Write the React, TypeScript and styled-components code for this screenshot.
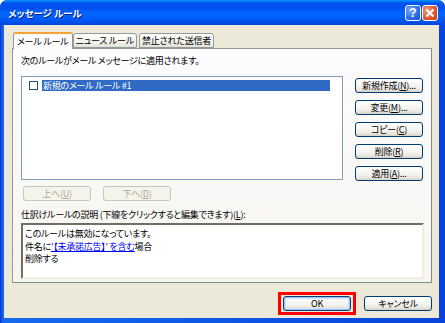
import React from "react";
import styled, { createGlobalStyle } from "styled-components";

const GlobalStyle = createGlobalStyle`
  html, body {
    margin: 0;
    padding: 0;
    background: #fff;
  }
  body {
    font-family: "Noto Sans CJK JP", "Liberation Sans", sans-serif;
    font-size: 9px;
    letter-spacing: -0.25px;
    font-feature-settings: "palt";
    color: #000;
  }
`;

const colors = {
  face: "#ECE9D8",
  border: "#919B9C",
  btnBorder: "#003C74",
  select: "#316AC5",
  disabled: "#ACA899",
  link: "#0000FF",
};

const Window = styled.div`
  width: 445px;
  height: 323px;
  box-sizing: border-box;
  display: flex;
  flex-direction: column;
  background: linear-gradient(90deg, #0831d9, #166aee 3px, #0843dc 445px);
  padding: 0 6px 5px 4px;
  border-radius: 7px 7px 0 0;
  overflow: hidden;
`;

const TitleBar = styled.div`
  height: 25px;
  margin: 0 -6px 0 -4px;
  padding: 0 7px 0 8px;
  display: flex;
  align-items: center;
  background: linear-gradient(
    180deg,
    #0997ff 0,
    #0053ee 3px,
    #0050ee 8px,
    #0066ff 14px,
    #0058f5 20px,
    #0046d8 25px
  );
  border-radius: 7px 7px 0 0;
`;

const Title = styled.div`
  flex: 1;
  color: #fff;
  font-weight: bold;
  font-size: 9.5px;
  letter-spacing: 0;
  text-shadow: 1px 1px 0 #0a1883;
`;

const CaptionButton = styled.div<{ $close?: boolean }>`
  width: 16px;
  height: 16px;
  margin-left: 1px;
  box-sizing: border-box;
  border: 1px solid #fff;
  border-radius: 3px;
  display: flex;
  align-items: center;
  justify-content: center;
  color: #fff;
  font-family: "Liberation Sans", sans-serif;
  font-weight: bold;
  font-size: 12px;
  letter-spacing: 0;
  background: ${(p) =>
    p.$close
      ? "radial-gradient(circle at 30% 30%, #f29a7c, #e0532f 60%, #c93b18)"
      : "radial-gradient(circle at 30% 30%, #7eaaf8, #2a6ae8 60%, #1b4fd0)"};
`;

const Body = styled.div`
  flex: 1;
  background: ${colors.face};
  display: flex;
  flex-direction: column;
  padding: 7px 5px 0 8px;
`;

const TabRow = styled.div`
  display: flex;
  height: 16px;
  align-items: flex-end;
  padding-left: 1px;
  position: relative;
  z-index: 1;
`;

const Tab = styled.div<{ $active?: boolean }>`
  box-sizing: border-box;
  height: ${(p) => (p.$active ? "17px" : "15px")};
  padding: 0 ${(p) => (p.$active ? "3px" : "2px")};
  margin-right: ${(p) => (p.$active ? "0" : "2px")};
  margin-bottom: ${(p) => (p.$active ? "-1px" : "0")};
  border: 1px solid ${colors.border};
  border-bottom: ${(p) => (p.$active ? "none" : `1px solid ${colors.border}`)};
  border-top: ${(p) => (p.$active ? "2px solid #f1a33a" : `1px solid ${colors.border}`)};
  border-radius: 3px 3px 0 0;
  background: ${(p) =>
    p.$active ? "#fcfcfe" : "linear-gradient(#ffffff, #f1efe8 70%, #e4e1d6)"};
  display: flex;
  align-items: center;
  line-height: 1;
  font-size: 9px;
  letter-spacing: -0.2px;
`;

const Panel = styled.div`
  width: 420px;
  height: 235px;
  box-sizing: border-box;
  border: 1px solid ${colors.border};
  border-right-color: #7e8a8c;
  border-bottom-color: #7e8a8c;
  background: linear-gradient(#fcfcfe, #f6f5f0);
  padding: 6px 8px 0 8px;
  display: flex;
  flex-direction: column;
`;

const Label = styled.div`
  height: 12px;
  line-height: 12px;
  white-space: nowrap;
`;

const RuleArea = styled.div`
  display: flex;
  gap: 12px;
  margin-top: 9px;
`;

const ListBox = styled.div`
  width: 323px;
  height: 104px;
  box-sizing: border-box;
  border: 1px solid #7f9db9;
  background: #fff;
  padding: 3px 0 0 7px;
`;

const ListItem = styled.div`
  display: flex;
  align-items: center;
  gap: 4px;
  height: 11px;
`;

const CheckBox = styled.div`
  width: 9px;
  height: 9px;
  box-sizing: border-box;
  border: 1px solid #1c5180;
  background: #fff;
`;

const ItemText = styled.div<{ $selected?: boolean }>`
  flex: 0 0 287px;
  height: 11px;
  line-height: 11px;
  padding-left: 1px;
  color: ${(p) => (p.$selected ? "#fff" : "#000")};
  background: ${(p) => (p.$selected ? colors.select : "transparent")};
`;

const ButtonColumn = styled.div`
  display: flex;
  flex-direction: column;
  gap: 7px;
  padding-top: 2px;
`;

const Button = styled.div<{ $disabled?: boolean; $default?: boolean }>`
  width: 68px;
  height: 15px;
  box-sizing: border-box;
  border: 1px solid ${(p) => (p.$disabled ? "#c9c7ba" : colors.btnBorder)};
  border-radius: 3px;
  background: ${(p) =>
    p.$disabled
      ? "#f5f4ea"
      : "linear-gradient(#ffffff, #f3f2ee 60%, #e6e3da 85%, #d6d0c5)"};
  box-shadow: ${(p) =>
    p.$default ? "inset 0 0 0 1px #a6c4f5, inset 0 0 0 2px #cee0fb" : "none"};
  color: ${(p) => (p.$disabled ? colors.disabled : "#000")};
  display: flex;
  align-items: center;
  justify-content: center;
  line-height: 1;
  white-space: nowrap;
`;

const Key = styled.span`
  text-decoration: underline;
`;

const MoveRow = styled.div`
  display: flex;
  gap: 12px;
  margin: 5px 0 0 2px;
`;

const DescLabel = styled(Label)`
  margin-top: 8px;
`;

const DescBox = styled.div`
  width: 403px;
  height: 56px;
  box-sizing: border-box;
  margin-top: 2px;
  border: 2px solid;
  border-color: #716f64 #f1efe2 #f1efe2 #716f64;
  background: #fff;
  padding: 3px 0 0 2px;
`;

const DescLine = styled.div`
  height: 12.5px;
  line-height: 12.5px;
  white-space: nowrap;
`;

const Link = styled.span`
  color: ${colors.link};
  text-decoration: underline;
`;

const Footer = styled.div`
  display: flex;
  justify-content: flex-end;
  align-items: center;
  gap: 8px;
  margin-top: 9px;
  padding-right: 1px;
  width: 420px;
`;

const Highlight = styled.div`
  border: 3px solid #ff0000;
  padding: 1px 2px;
`;

const rightButtons: [string, string, string][] = [
  ["新規作成(", "N", ")..."],
  ["変更(", "M", ")..."],
  ["コピー(", "C", ")"],
  ["削除(", "R", ")"],
  ["適用(", "A", ")..."],
];

const App: React.FC = () => {
  return (
    <>
      <GlobalStyle />
      <Window>
        <TitleBar>
          <Title>メッセージ ルール</Title>
          <CaptionButton>?</CaptionButton>
          <CaptionButton $close>
            <svg width="10" height="10" viewBox="0 0 10 10">
              <path d="M1.5 1.5 L8.5 8.5 M8.5 1.5 L1.5 8.5" stroke="#fff" strokeWidth="2" />
            </svg>
          </CaptionButton>
        </TitleBar>
        <Body>
          <TabRow>
            <Tab $active>メール ルール</Tab>
            <Tab>ニュース ルール</Tab>
            <Tab>禁止された送信者</Tab>
          </TabRow>
          <Panel>
            <Label>次のルールがメール メッセージに適用されます。</Label>
            <RuleArea>
              <ListBox>
                <ListItem>
                  <CheckBox />
                  <ItemText $selected>新規のメール ルール #1</ItemText>
                </ListItem>
              </ListBox>
              <ButtonColumn>
                {rightButtons.map(([a, k, b]) => (
                  <Button key={k}>
                    {a}
                    <Key>{k}</Key>
                    {b}
                  </Button>
                ))}
              </ButtonColumn>
            </RuleArea>
            <MoveRow>
              <Button $disabled>
                上へ(<Key>U</Key>)
              </Button>
              <Button $disabled>
                下へ(<Key>D</Key>)
              </Button>
            </MoveRow>
            <DescLabel>
              仕訳けルールの説明 (下線をクリックすると編集できます)(<Key>L</Key>):
            </DescLabel>
            <DescBox>
              <DescLine>このルールは無効になっています。</DescLine>
              <DescLine>
                件名に<Link>'【未承諾広告】' を含む</Link>場合
              </DescLine>
              <DescLine>削除する</DescLine>
            </DescBox>
          </Panel>
          <Footer>
            <Highlight>
              <Button $default>OK</Button>
            </Highlight>
            <Button>キャンセル</Button>
          </Footer>
        </Body>
      </Window>
    </>
  );
};

export default App;
